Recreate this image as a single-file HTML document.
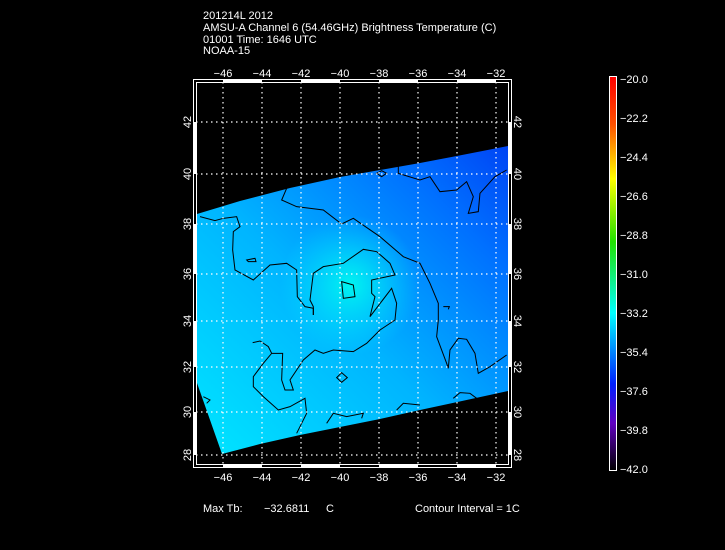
<!DOCTYPE html>
<html><head><meta charset="utf-8"><style>
html,body{margin:0;padding:0;background:#000;width:725px;height:550px;overflow:hidden}
svg{display:block}
text{font-family:"Liberation Sans",sans-serif;fill:#fff;font-size:11px}
</style></head><body>
<svg width="725" height="550" viewBox="0 0 725 550">
<defs>
<linearGradient id="fld" x1="0" y1="1" x2="1" y2="0">
<stop offset="0" stop-color="#00e6ff"/><stop offset="0.45" stop-color="#00b4ff"/><stop offset="0.8" stop-color="#0070ff"/><stop offset="1" stop-color="#0044f4"/>
</linearGradient>
<radialGradient id="blob" cx="350" cy="285" r="70" gradientUnits="userSpaceOnUse">
<stop offset="0" stop-color="#00f4f0" stop-opacity="1"/><stop offset="1" stop-color="#00e0ff" stop-opacity="0"/>
</radialGradient>
<linearGradient id="cb" x1="0" y1="0" x2="0" y2="1">
<stop offset="0" stop-color="#ff0000"/><stop offset="0.12" stop-color="#ff5000"/><stop offset="0.26" stop-color="#ffff00"/><stop offset="0.42" stop-color="#20e000"/><stop offset="0.6" stop-color="#00ffff"/><stop offset="0.78" stop-color="#0020ff"/><stop offset="0.88" stop-color="#6000c0"/><stop offset="1" stop-color="#000000"/>
</linearGradient>
</defs>
<text x="203" y="19">201214L 2012</text>
<text x="203" y="31">AMSU-A Channel 6 (54.46GHz) Brightness Temperature (C)</text>
<text x="203" y="43">01001 Time: 1646 UTC</text>
<text x="203" y="54">NOAA-15</text>

<polygon points="197,214 240,201 290,188 340,177 380,170 420,163 462,155 508,146 508,391 462,401 420,410 380,419 340,427 300,435 260,444 222,454 197,383" fill="url(#fld)"/>
<polygon points="197,214 240,201 290,188 340,177 380,170 420,163 462,155 508,146 508,391 462,401 420,410 380,419 340,427 300,435 260,444 222,454 197,383" fill="url(#blob)"/>

<g transform="translate(190,150) scale(0.3333)" fill="none" stroke="#000" stroke-width="3">
<path d="M30,200 L75,212 L100,205 L140,200 L150,230 L130,245 L128,300 L135,360 L190,390 L240,345 L290,340 L320,360 L322,440 L345,470 L370,475 L370,495"/>
<path d="M290,115 L275,150 L320,170 L400,180 L455,222 L490,205 L570,260 L640,320 L690,340 L720,400 L745,460 L745,510 L740,560 L770,640 L775,655 L780,600 L805,565 L830,568 L855,610 L865,670 L900,650 L950,615"/>
<path d="M370,495 L370,470 L360,450 L370,370 L400,350 L460,340 L520,298 L560,305 L600,340 L615,375 L545,390 L545,430 L555,440 L540,500 L605,415 L620,460 L615,510 L570,540 L530,580 L490,605 L430,600 L400,610 L375,600 L340,630 L320,660 L300,690 L310,720 L285,720 L275,690 L278,610 L245,610 L220,640 L190,680 L190,710 L220,740 L265,780 L300,770 L345,745 L350,790 L320,850"/>
<path d="M455,395 L490,405 L495,440 L460,445 Z"/>
<path d="M440,683 L455,668 L472,683 L455,697 Z"/>
<path d="M560,70 L575,62 L590,70 L575,80 Z"/>
<path d="M170,330 L195,325 L198,335 L175,335 Z"/>
<path d="M625,35 L625,70 L690,90 L720,80 L750,125 L800,120 L830,95 L850,140 L835,190 L865,185 L870,130 L915,80 L950,60"/>
<path d="M410,820 L430,790 L470,800 L520,790 L515,805"/>
<path d="M620,780 L640,760 L690,765"/>
<path d="M790,745 L810,728 L840,730 L860,745"/>
<path d="M188,578 L210,573 L235,590 L245,610"/>
<path d="M40,740 L60,750 L50,760"/>
<path d="M760,470 L778,470 L775,478"/>
</g>

<g stroke="#fff" stroke-width="1.2" stroke-dasharray="1.5,3.5">
<line x1="223" y1="82" x2="223" y2="464"/><line x1="262" y1="82" x2="262" y2="464"/><line x1="301" y1="82" x2="301" y2="464"/><line x1="340" y1="82" x2="340" y2="464"/><line x1="379" y1="82" x2="379" y2="464"/><line x1="418" y1="82" x2="418" y2="464"/><line x1="457" y1="82" x2="457" y2="464"/><line x1="496" y1="82" x2="496" y2="464"/>
<line x1="196" y1="122" x2="508" y2="122"/><line x1="196" y1="174" x2="508" y2="174"/><line x1="196" y1="224" x2="508" y2="224"/><line x1="196" y1="274" x2="508" y2="274"/><line x1="196" y1="321" x2="508" y2="321"/><line x1="196" y1="367" x2="508" y2="367"/><line x1="196" y1="412" x2="508" y2="412"/><line x1="196" y1="455" x2="508" y2="455"/>
</g>

<g fill="none" stroke="#fff" stroke-width="1">
<rect x="193.5" y="79.5" width="318" height="388"/>
<rect x="196.5" y="82.5" width="312" height="382"/>
</g>
<g fill="#fff">
<rect x="223" y="80" width="39" height="2"/><rect x="301" y="80" width="39" height="2"/><rect x="379" y="80" width="39" height="2"/><rect x="457" y="80" width="39" height="2"/>
<rect x="223" y="465" width="39" height="2"/><rect x="301" y="465" width="39" height="2"/><rect x="379" y="465" width="39" height="2"/><rect x="457" y="465" width="39" height="2"/>
<rect x="194" y="122" width="2" height="52"/><rect x="194" y="224" width="2" height="50"/><rect x="194" y="321" width="2" height="46"/><rect x="194" y="412" width="2" height="43"/>
<rect x="509" y="122" width="2" height="52"/><rect x="509" y="224" width="2" height="50"/><rect x="509" y="321" width="2" height="46"/><rect x="509" y="412" width="2" height="43"/>
</g>

<g text-anchor="middle">
<text x="223" y="77">−46</text><text x="262" y="77">−44</text><text x="301" y="77">−42</text><text x="340" y="77">−40</text><text x="379" y="77">−38</text><text x="418" y="77">−36</text><text x="457" y="77">−34</text><text x="496" y="77">−32</text>
<text x="223" y="481">−46</text><text x="262" y="481">−44</text><text x="301" y="481">−42</text><text x="340" y="481">−40</text><text x="379" y="481">−38</text><text x="418" y="481">−36</text><text x="457" y="481">−34</text><text x="496" y="481">−32</text>
</g>
<g text-anchor="middle">
<text transform="translate(191,122) rotate(-90)">42</text><text transform="translate(191,174) rotate(-90)">40</text><text transform="translate(191,224) rotate(-90)">38</text><text transform="translate(191,274) rotate(-90)">36</text><text transform="translate(191,321) rotate(-90)">34</text><text transform="translate(191,367) rotate(-90)">32</text><text transform="translate(191,412) rotate(-90)">30</text><text transform="translate(191,455) rotate(-90)">28</text>
<text transform="translate(514,122) rotate(90)">42</text><text transform="translate(514,174) rotate(90)">40</text><text transform="translate(514,224) rotate(90)">38</text><text transform="translate(514,274) rotate(90)">36</text><text transform="translate(514,321) rotate(90)">34</text><text transform="translate(514,367) rotate(90)">32</text><text transform="translate(514,412) rotate(90)">30</text><text transform="translate(514,455) rotate(90)">28</text>
</g>

<rect x="609.5" y="76.5" width="7" height="394" fill="url(#cb)" stroke="#fff" stroke-width="1"/>
<g>
<text x="620" y="83">−20.0</text><text x="620" y="122">−22.2</text><text x="620" y="161">−24.4</text><text x="620" y="200">−26.6</text><text x="620" y="239">−28.8</text><text x="620" y="278">−31.0</text><text x="620" y="317">−33.2</text><text x="620" y="356">−35.4</text><text x="620" y="395">−37.6</text><text x="620" y="434">−39.8</text><text x="620" y="473">−42.0</text>
</g>

<text x="203" y="512">Max Tb:</text>
<text x="264" y="512">−32.6811</text>
<text x="326" y="512">C</text>
<text x="415" y="512">Contour Interval = 1C</text>
</svg>
</body></html>
